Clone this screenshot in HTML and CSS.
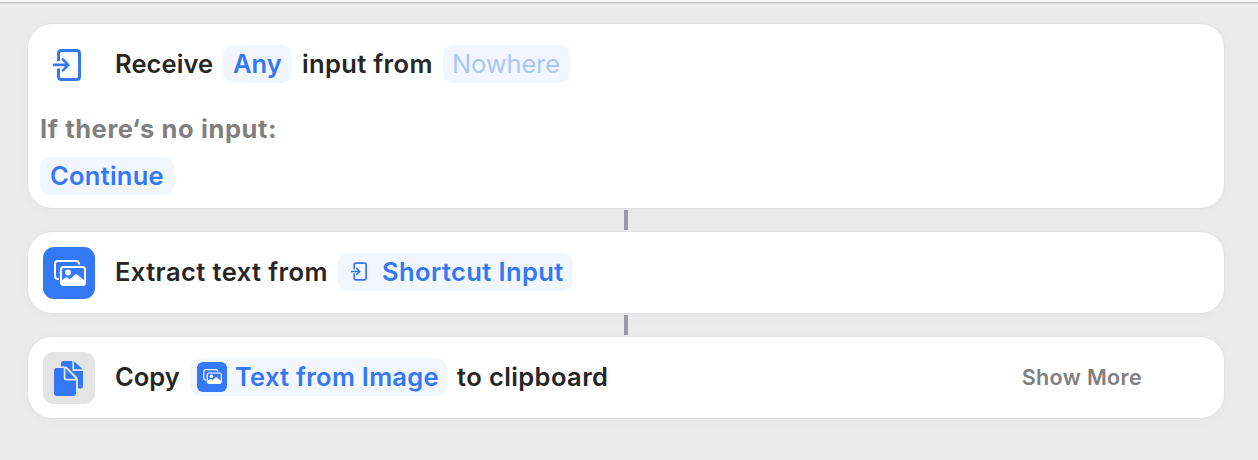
FILE: index.html
```html
<!DOCTYPE html>
<html lang="en">
<head>
<meta charset="utf-8">
<title>Shortcut</title>
<link rel="stylesheet" href="styles.css">
</head>
<body>
<svg class="defs" aria-hidden="true">
  <symbol id="input" viewBox="0 0 28 32">
    <path d="M5.500 12V4.500Q5.500 1.500 8.500 1.500H23.500Q26.500 1.500 26.500 4.500V27.500Q26.500 30.500 23.500 30.500H8.500Q5.500 30.500 5.500 27.500V19.500" fill="none" stroke="currentColor" stroke-width="3"/>
    <path d="M0 15.900H15M10 10.500L15.300 15.900L10 21.300" fill="none" stroke="currentColor" stroke-width="2.600" stroke-linecap="round" stroke-linejoin="round"/>
  </symbol>
  <symbol id="photos" viewBox="0 0 32 26">
    <path d="M4.800 19H4Q1 19 1 16V4Q1 1 4 1H22Q25 1 25 4V4.500" fill="none" stroke="currentColor" stroke-width="2"/>
    <rect x="6.900" y="6.900" width="24.200" height="18" rx="2.600" fill="none" stroke="currentColor" stroke-width="2"/>
    <circle cx="14" cy="12.600" r="3" fill="currentColor"/>
    <path d="M7 21L11.500 17.500Q12.500 16.800 13.500 17.500L15.800 19.300L21 14.700Q22.300 13.600 23.600 14.700L31 21V23Q31 25 29 25H9Q7 25 7 23Z" fill="currentColor"/>
  </symbol>
</svg>
<main class="editor">
  <section class="card receive">
    <div class="row">
      <span class="tile"><svg class="input-icon"><use href="#input"/></svg></span>
      <span class="text w-receive">Receive</span>
      <span class="chip c-any">Any</span>
      <span class="text w-input">input from</span>
      <span class="chip empty">Nowhere</span>
    </div>
    <p class="caption">If there‘s no input:</p>
    <span class="chip c-continue">Continue</span>
  </section>
  <div class="connector"></div>
  <section class="card action">
    <span class="tile blue"><svg class="photos-icon"><use href="#photos"/></svg></span>
    <span class="text w-extract">Extract text from</span>
    <span class="chip c-shortcut"><svg class="small-input"><use href="#input"/></svg><span>Shortcut Input</span></span>
  </section>
  <div class="connector"></div>
  <section class="card action">
    <span class="tile gray"><svg class="copy-icon" viewBox="0 0 30 36">
      <path d="M7 6.500V3.500Q7 1 9.500 1H18.300V9.500Q18.300 11 19.800 11H29V26Q29 28.500 26.500 28.500H24V19.500Q24 18 23 17L13.500 7.500Q12.500 6.500 11 6.500Z" fill="currentColor"/>
      <path d="M20 1.200L28.800 9.300H21Q20 9.300 20 8.300Z" fill="currentColor"/>
      <path d="M0 10.500Q0 8 2.500 8H9.700V18Q9.700 20.500 12.200 20.500H22V33Q22 36 19 36H3Q0 36 0 33Z" fill="currentColor"/>
      <path d="M11.500 8.300L21.700 18.700H12.500Q11.500 18.700 11.500 17.700Z" fill="currentColor"/>
    </svg></span>
    <span class="text w-copy">Copy</span>
    <span class="chip c-image"><span class="mini"><svg class="small-photos"><use href="#photos"/></svg></span><span>Text from Image</span></span>
    <span class="text w-clip">to clipboard</span>
    <span class="more">Show More</span>
  </section>
</main>
</body>
</html>
```
FILE: styles.css
```css
* { box-sizing: border-box; }
body {
  margin: 0;
  height: 460px;
  overflow: hidden;
  background: #ebebeb;
  font: 600 25.5px/38px Inter, "Liberation Sans", sans-serif;
  color: #262626;
}
.defs { display: none; }
svg { display: block; flex: none; overflow: visible; }
body::before { content: ""; display: block; height: 2px; background: #f6f6f6; }
.editor {
  height: 458px;
  padding: 21px 34px 0 28px;
  border-top: 1px solid #c4c4c4;
  box-shadow: inset 0 1px 0 #dedede;
}
.card {
  background: #fff;
  border-radius: 24px;
  box-shadow: 0 0 0 1px rgba(0,0,0,.025), 0 2px 14px rgba(0,0,0,.03);
}
.receive { height: 184px; padding: 15px 12px 0; }
.row { display: flex; align-items: center; height: 50px; padding-left: 3px; }
.action { display: flex; align-items: center; height: 81px; padding: 0 82px 0 15px; }
.action > .text, .action > .chip, .more { margin-bottom: 2px; }
.tile {
  display: flex;
  align-items: center;
  justify-content: center;
  width: 52px;
  height: 52px;
  margin-right: 20px;
  border-radius: 11px;
  flex: none;
  color: #3478f6;
}
.blue { background: #3478f6; color: #fff; }
.gray { background: #e4e4e4; }
.input-icon { width: 28px; height: 32px; margin: 2px 0 0 -5px; }
.photos-icon { width: 32px; height: 26px; margin-left: 2px; }
.copy-icon { width: 30px; height: 36px; }
.text, .chip, .caption, .more { white-space: nowrap; }
.text { flex: none; }
.chip {
  display: flex;
  align-items: center;
  height: 38px;
  padding: 0 10px;
  border-radius: 10px;
  background: #f2f7ff;
  color: #3478f6;
  flex: none;
}
.caption { margin: 21px 0 9px; color: #808080; font-weight: 700; letter-spacing: .6px; }
.w-receive { width: 108px; letter-spacing: .1px; }
.c-any { width: 69px; margin-right: 10px; }
.w-input { width: 141px; letter-spacing: .35px; }
.empty { width: 127px; padding-left: 9px; color: #a9c7fb; font-weight: 400; letter-spacing: -.15px; }
.c-continue { width: 134px; letter-spacing: .25px; }
.w-extract { width: 223px; letter-spacing: .42px; }
.c-shortcut { width: 235px; letter-spacing: .4px; }
.small-input { width: 16px; height: 19px; margin: 0 15px 0 3px; }
.w-copy { width: 75px; }
.c-image { width: 257px; padding: 0 0 0 7px; margin-right: 10px; letter-spacing: .27px; }
.mini {
  display: flex;
  align-items: center;
  justify-content: center;
  flex: none;
  width: 30px;
  height: 30px;
  margin-right: 8px;
  border-radius: 6px;
  background: #3478f6;
  color: #fff;
}
.small-photos { width: 19px; height: 15px; margin-left: 1px; }
.w-clip { letter-spacing: .4px; }
.more { margin-left: auto; font-size: 21.5px; letter-spacing: .35px; color: #808080; }
.connector { width: 4px; height: 20px; margin: 2px 0 2px 596px; background: #989ba3; }
```
